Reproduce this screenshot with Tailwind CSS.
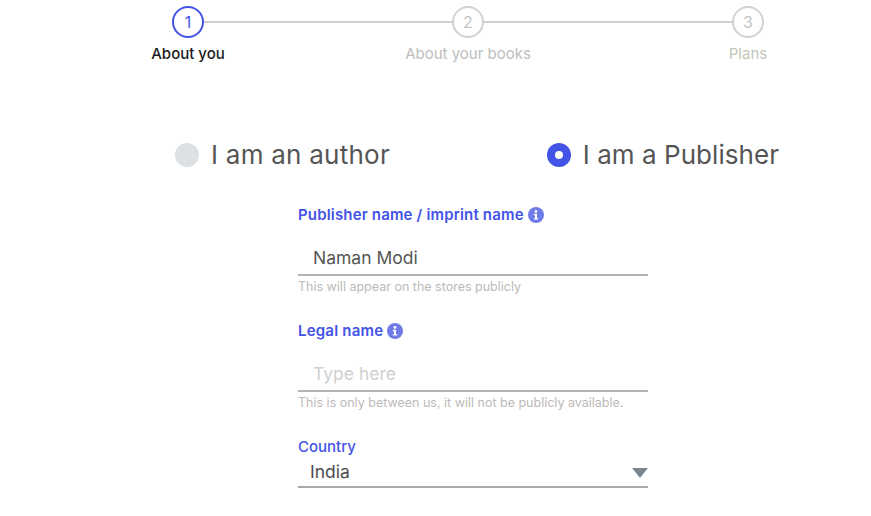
<!DOCTYPE html>
<html lang="en">
<head>
    <meta charset="UTF-8">
    <title>Sign up</title>
    <script src="https://cdn.jsdelivr.net/npm/@tailwindcss/browser@4"></script>
</head>
<body class="bg-white h-[516px] overflow-hidden font-['Inter',sans-serif]">
    <!-- Stepper -->
    <div class="pt-[6px] ml-[172px] w-[592px] flex items-center">
        <div class="w-8 h-8 rounded-full border-2 border-[#4353e6] flex items-center justify-center text-[16px] leading-none text-[#4353e6]">1</div>
        <div class="flex-1 h-[2px] bg-[#cfcfcf]"></div>
        <div class="w-8 h-8 rounded-full border-2 border-[#d2d2d2] flex items-center justify-center text-[16px] leading-none text-[#c4c4c4]">2</div>
        <div class="flex-1 h-[2px] bg-[#cfcfcf]"></div>
        <div class="w-8 h-8 rounded-full border-2 border-[#d2d2d2] flex items-center justify-center text-[16px] leading-none text-[#c4c4c4]">3</div>
    </div>
    <div class="mt-[6px] ml-[108px] w-[720px] flex justify-between text-[15px] leading-[20px] text-center">
        <span class="w-[160px] font-medium text-[#1c1c1c]">About you</span>
        <span class="w-[160px] text-[#bdbdbd]">About your books</span>
        <span class="w-[160px] text-[#c2c6b8]">Plans</span>
    </div>

    <!-- Author type -->
    <div class="mt-[75px] ml-[175px] w-[604px] flex justify-between text-[26px] leading-[32px] text-[#555555]">
        <label class="flex items-center gap-3 tracking-[0.25px]">
            <span class="w-6 h-6 rounded-full bg-[#dde1e5]"></span>
            <span>I am an author</span>
        </label>
        <label class="flex items-center gap-3 tracking-[0.05px]">
            <span class="w-6 h-6 rounded-full bg-[#4353e6] flex items-center justify-center">
                <span class="w-2 h-2 rounded-full bg-white"></span>
            </span>
            <span>I am a Publisher</span>
        </label>
    </div>

    <!-- Form -->
    <form class="mt-[34px] ml-[298px] w-[350px]">
        <div class="flex items-center gap-1 h-5 text-[15px] tracking-[0.17px] font-semibold text-[#4353e6]">
            <span>Publisher name / imprint name</span>
            <svg class="w-4 h-4" viewBox="0 0 16 16"><circle cx="8" cy="8" r="8" fill="#6f7ce8"/><circle cx="8" cy="4.4" r="1.4" fill="#fff"/><path d="M5.8 6.8h3.2v4.4h1.2v1.4H5.8v-1.4H7V8.200H5.800z" fill="#fff"/></svg>
        </div>
        <div class="mt-[16px] h-[35px] pt-[2px] px-[15px] flex items-center border-b-2 border-[#b4b4b4] text-[17.500px] text-[#555555]">Naman Modi</div>
        <p class="mt-[2px] h-[18px] text-[12.500px] leading-[18px] text-[#bdb9b9]">This will appear on the stores publicly</p>

        <div class="mt-[25px] flex items-center gap-1 h-5 text-[15px] tracking-[0.2px] font-semibold text-[#4353e6]">
            <span>Legal name</span>
            <svg class="w-4 h-4" viewBox="0 0 16 16"><circle cx="8" cy="8" r="8" fill="#6f7ce8"/><circle cx="8" cy="4.4" r="1.4" fill="#fff"/><path d="M5.8 6.8h3.2v4.4h1.2v1.4H5.8v-1.4H7V8.200H5.800z" fill="#fff"/></svg>
        </div>
        <div class="mt-[16px] h-[35px] pt-[2px] px-[15px] flex items-center border-b-2 border-[#b4b4b4] text-[17.500px] text-[#cfcfcf]">Type here</div>
        <p class="mt-[2px] h-[18px] text-[12.500px] leading-[18px] text-[#bdb9b9]">This is only between us, it will not be publicly available.</p>

        <div class="mt-[25px] h-5 flex items-center text-[15px] font-medium text-[#4353e6]">Country</div>
        <div class="h-[31px] pt-[2px] pl-3 flex items-center justify-between border-b-2 border-[#a9a9a9] text-[17.500px] text-[#4b4b4b]">
            <span>India</span>
            <span class="w-0 h-0 border-x-8 border-x-transparent border-t-[10px] border-t-[#7b8590]"></span>
        </div>
    </form>
</body>
</html>
